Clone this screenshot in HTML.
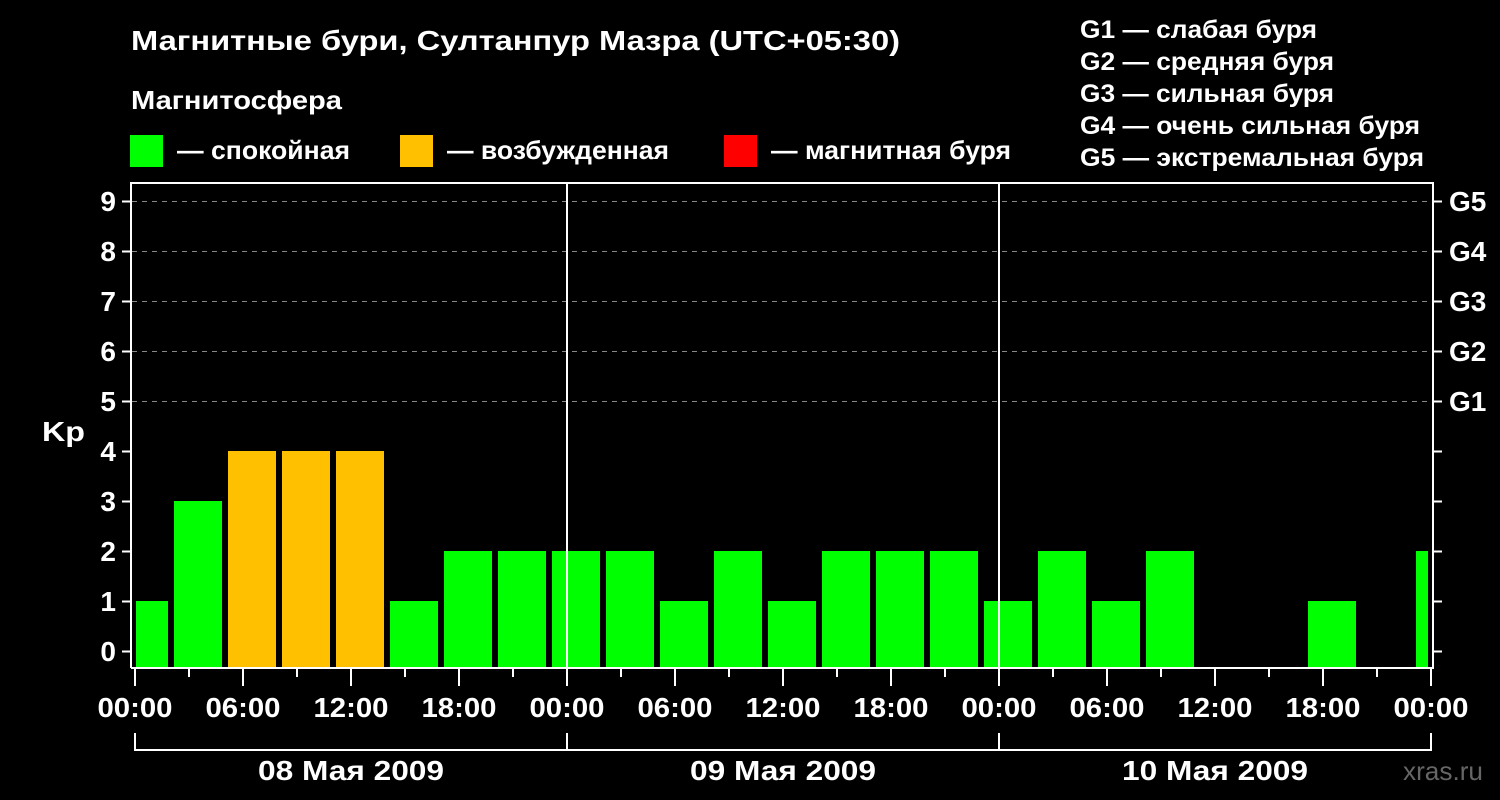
<!DOCTYPE html>
<html><head><meta charset="utf-8"><style>
html,body{margin:0;padding:0;background:#000;}
svg{display:block}
text{font-family:"Liberation Sans",Arial,sans-serif;font-weight:bold;fill:#fff}
</style></head><body>
<svg width="1500" height="800" viewBox="0 0 1500 800" xmlns="http://www.w3.org/2000/svg">
<rect width="1500" height="800" fill="#000"/>
<text x="131" y="50" font-size="28" textLength="769" lengthAdjust="spacingAndGlyphs">Магнитные бури, Султанпур Мазра (UTC+05:30)</text>
<text x="131" y="109" font-size="26" textLength="211" lengthAdjust="spacingAndGlyphs">Магнитосфера</text>
<rect x="130" y="135" width="33" height="32" fill="#00ff00"/>
<text x="177" y="159" font-size="26" textLength="173" lengthAdjust="spacingAndGlyphs">— спокойная</text>
<rect x="400" y="135" width="33" height="32" fill="#ffc000"/>
<text x="447" y="159" font-size="26" textLength="222" lengthAdjust="spacingAndGlyphs">— возбужденная</text>
<rect x="724" y="135" width="33" height="32" fill="#ff0000"/>
<text x="771" y="159" font-size="26" textLength="240" lengthAdjust="spacingAndGlyphs">— магнитная буря</text>
<g font-size="25">
<text x="1080" y="38" textLength="237" lengthAdjust="spacingAndGlyphs">G1 — слабая буря</text>
<text x="1080" y="70" textLength="254" lengthAdjust="spacingAndGlyphs">G2 — средняя буря</text>
<text x="1080" y="102" textLength="254" lengthAdjust="spacingAndGlyphs">G3 — сильная буря</text>
<text x="1080" y="134" textLength="340" lengthAdjust="spacingAndGlyphs">G4 — очень сильная буря</text>
<text x="1080" y="166" textLength="344" lengthAdjust="spacingAndGlyphs">G5 — экстремальная буря</text>
</g>
<g stroke="#888" stroke-width="1" stroke-dasharray="5,5">
<line x1="132" y1="201.5" x2="1433" y2="201.5"/>
<line x1="132" y1="251.5" x2="1433" y2="251.5"/>
<line x1="132" y1="301.5" x2="1433" y2="301.5"/>
<line x1="132" y1="351.5" x2="1433" y2="351.5"/>
<line x1="132" y1="401.5" x2="1433" y2="401.5"/>
</g>
<g fill="#00ff00">
<rect x="136" y="601" width="32" height="67"/>
<rect x="174" y="501" width="48" height="167"/>
<rect x="390" y="601" width="48" height="67"/>
<rect x="444" y="551" width="48" height="117"/>
<rect x="498" y="551" width="48" height="117"/>
<rect x="552" y="551" width="48" height="117"/>
<rect x="606" y="551" width="48" height="117"/>
<rect x="660" y="601" width="48" height="67"/>
<rect x="714" y="551" width="48" height="117"/>
<rect x="768" y="601" width="48" height="67"/>
<rect x="822" y="551" width="48" height="117"/>
<rect x="876" y="551" width="48" height="117"/>
<rect x="930" y="551" width="48" height="117"/>
<rect x="984" y="601" width="48" height="67"/>
<rect x="1038" y="551" width="48" height="117"/>
<rect x="1092" y="601" width="48" height="67"/>
<rect x="1146" y="551" width="48" height="117"/>
<rect x="1308" y="601" width="48" height="67"/>
<rect x="1416" y="551" width="12" height="117"/>
</g>
<g fill="#ffc000">
<rect x="228" y="451" width="48" height="217"/>
<rect x="282" y="451" width="48" height="217"/>
<rect x="336" y="451" width="48" height="217"/>
</g>
<g stroke="#fff" stroke-width="2" fill="none">
<path d="M131,668 V183 H1433 V668 H131"/>
<line x1="567" y1="183" x2="567" y2="668"/>
<line x1="999" y1="183" x2="999" y2="668"/>
</g>
<g stroke="#fff" stroke-width="2">
<path d="M122,201.5H131M122,251.5H131M122,301.5H131M122,351.5H131M122,401.5H131M122,451.5H131M122,501.5H131M122,551.5H131M122,601.5H131M122,651.5H131"/>
<path d="M1433,201.5H1442M1433,251.5H1442M1433,301.5H1442M1433,351.5H1442M1433,401.5H1442M1433,451.5H1442M1433,501.5H1442M1433,551.5H1442M1433,601.5H1442M1433,651.5H1442"/>
<path d="M135,668V686M243,668V686M351,668V686M459,668V686M567,668V686M675,668V686M783,668V686M891,668V686M999,668V686M1107,668V686M1215,668V686M1323,668V686M1431,668V686"/>
<path d="M189,668V677M297,668V677M405,668V677M513,668V677M621,668V677M729,668V677M837,668V677M945,668V677M1053,668V677M1161,668V677M1269,668V677M1377,668V677"/>
<path d="M135,733V750H1431V733M567,733V750M999,733V750" fill="none"/>
</g>
<g font-size="28" text-anchor="end">
<text x="116" y="211">9</text><text x="116" y="261">8</text><text x="116" y="311">7</text>
<text x="116" y="361">6</text><text x="116" y="411">5</text><text x="116" y="461">4</text>
<text x="116" y="511">3</text><text x="116" y="561">2</text><text x="116" y="611">1</text>
<text x="116" y="661">0</text>
</g>
<text x="42" y="441" font-size="28" textLength="43" lengthAdjust="spacingAndGlyphs">Kp</text>
<g font-size="28">
<text x="1449" y="211">G5</text><text x="1449" y="261">G4</text><text x="1449" y="311">G3</text>
<text x="1449" y="361">G2</text><text x="1449" y="411">G1</text>
</g>
<g font-size="28" text-anchor="middle">
<text x="135" y="717" textLength="75" lengthAdjust="spacingAndGlyphs">00:00</text><text x="243" y="717" textLength="75" lengthAdjust="spacingAndGlyphs">06:00</text><text x="351" y="717" textLength="75" lengthAdjust="spacingAndGlyphs">12:00</text><text x="459" y="717" textLength="75" lengthAdjust="spacingAndGlyphs">18:00</text>
<text x="567" y="717" textLength="75" lengthAdjust="spacingAndGlyphs">00:00</text><text x="675" y="717" textLength="75" lengthAdjust="spacingAndGlyphs">06:00</text><text x="783" y="717" textLength="75" lengthAdjust="spacingAndGlyphs">12:00</text><text x="891" y="717" textLength="75" lengthAdjust="spacingAndGlyphs">18:00</text>
<text x="999" y="717" textLength="75" lengthAdjust="spacingAndGlyphs">00:00</text><text x="1107" y="717" textLength="75" lengthAdjust="spacingAndGlyphs">06:00</text><text x="1215" y="717" textLength="75" lengthAdjust="spacingAndGlyphs">12:00</text><text x="1323" y="717" textLength="75" lengthAdjust="spacingAndGlyphs">18:00</text>
<text x="1431" y="717" textLength="75" lengthAdjust="spacingAndGlyphs">00:00</text>
<text x="351" y="780" textLength="186" lengthAdjust="spacingAndGlyphs">08 Мая 2009</text>
<text x="783" y="780" textLength="186" lengthAdjust="spacingAndGlyphs">09 Мая 2009</text>
<text x="1215" y="780" textLength="186" lengthAdjust="spacingAndGlyphs">10 Мая 2009</text>
</g>
<text x="1403" y="780" font-size="26" textLength="80" lengthAdjust="spacingAndGlyphs" style="font-weight:normal;fill:#666">xras.ru</text>
</svg>
</body></html>
